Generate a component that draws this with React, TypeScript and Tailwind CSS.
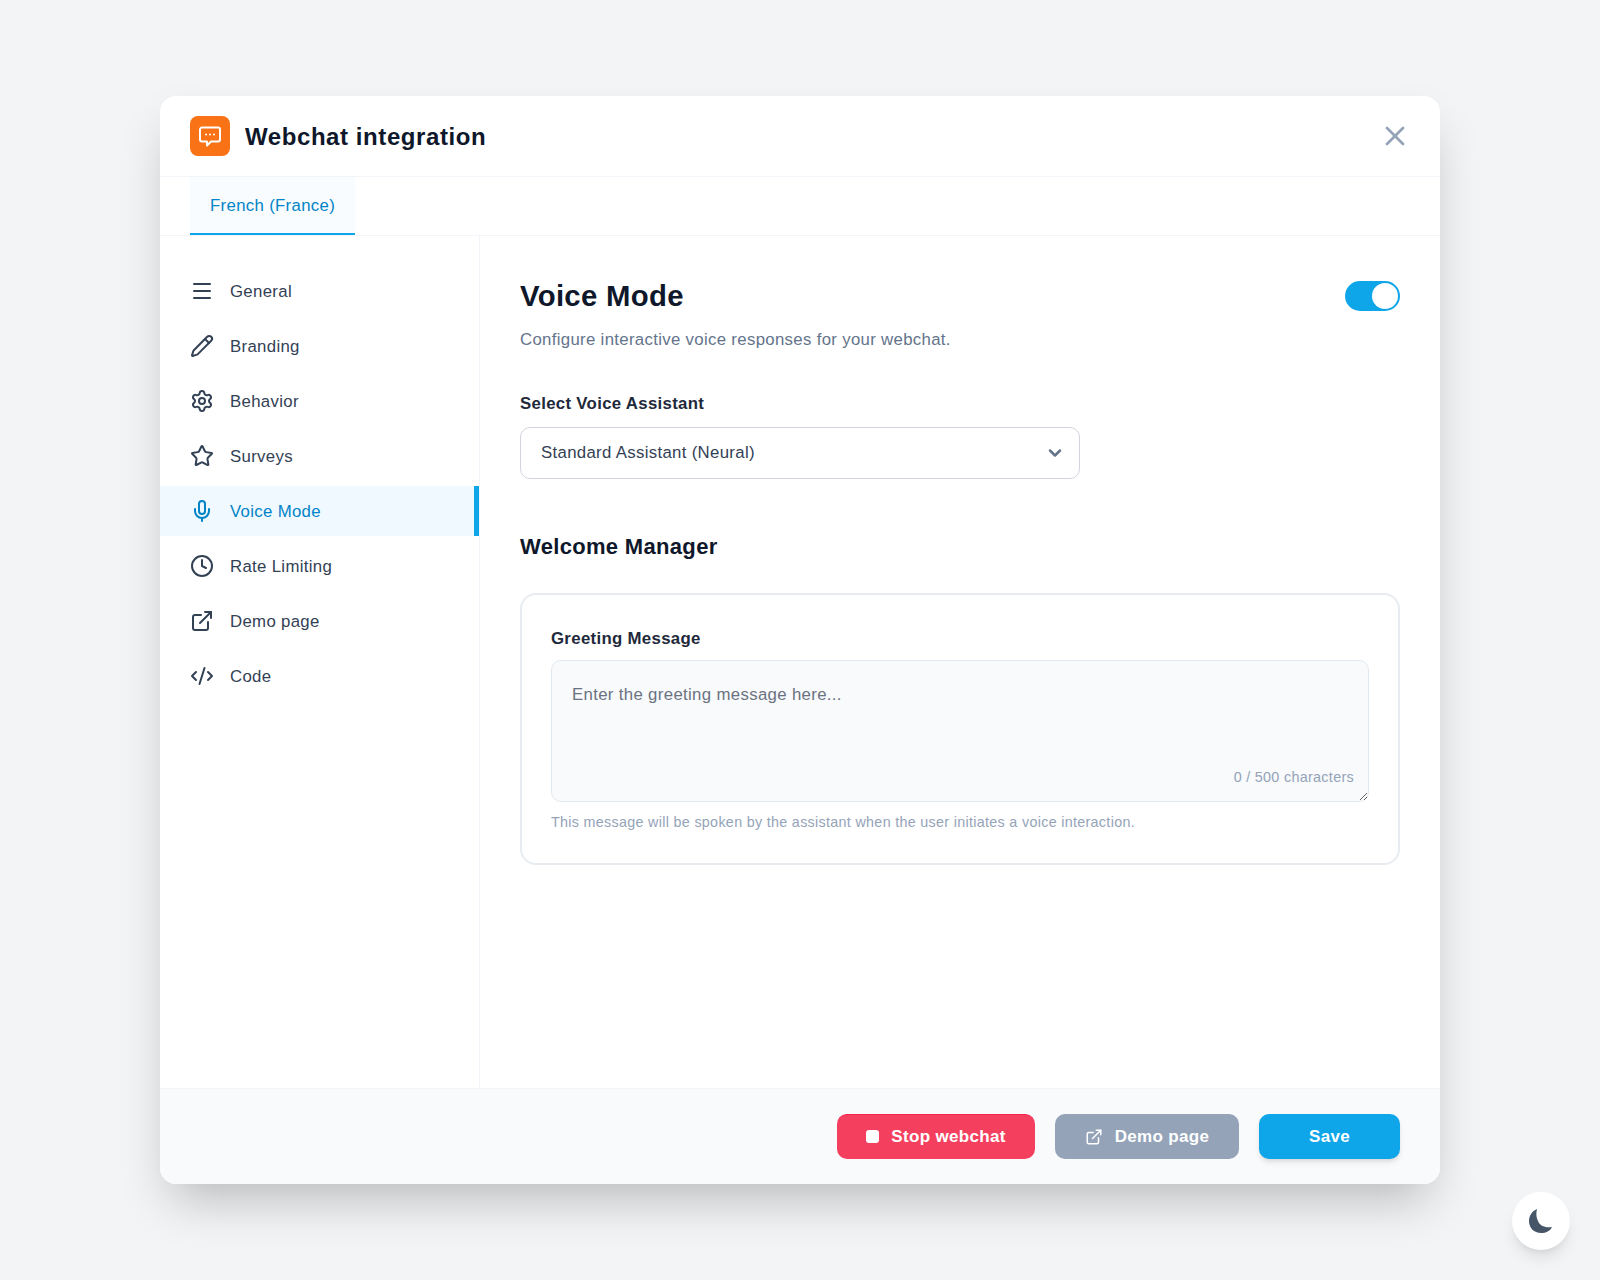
import React from 'react';
import { Menu, Pencil, Settings, Star, Mic, Clock, ExternalLink, CodeXml, X, ChevronDown } from 'lucide-react';

const navItems = [
  { label: 'General', icon: Menu },
  { label: 'Branding', icon: Pencil },
  { label: 'Behavior', icon: Settings },
  { label: 'Surveys', icon: Star },
  { label: 'Voice Mode', icon: Mic, active: true },
  { label: 'Rate Limiting', icon: Clock },
  { label: 'Demo page', icon: ExternalLink },
  { label: 'Code', icon: CodeXml },
];

const NavItem = ({ label, icon: Icon, active }: { label: string; icon: any; active?: boolean }) => (
  <div
    className={`flex h-[50px] items-center gap-4 border-r-[5px] pl-[30px] text-[16.8px] ${
      active ? 'border-[#0ea5e9] bg-[#f0f9ff] text-[#0284c7]' : 'border-transparent text-[#334155]'
    }`}
  >
    <Icon size={24} strokeWidth={2} />
    <span className="pt-[2px]">{label}</span>
  </div>
);

export default function App() {
  return (
    <div className="relative flex min-h-screen items-center justify-center bg-[#f3f4f6] font-['Liberation_Sans',sans-serif] tracking-[0.02em]">
      <div className="flex h-[1088px] w-[1280px] flex-col overflow-hidden rounded-2xl bg-white shadow-[0_25px_50px_-12px_rgba(0,0,0,0.25)]">
        <header className="flex h-[81px] shrink-0 items-center justify-between border-b border-[#f1f5f9] pr-[29px] pl-[30px]">
          <div className="flex items-center gap-[15px]">
            <div className="flex h-10 w-10 items-center justify-center rounded-lg bg-[#f97316] text-white">
              <svg width="24" height="24" viewBox="0 0 24 24" fill="none" stroke="currentColor" strokeWidth="2" strokeLinejoin="round">
                <path d="M4 3.5h16a2 2 0 0 1 2 2v10a2 2 0 0 1-2 2h-7l-4 4v-4H4a2 2 0 0 1-2-2v-10a2 2 0 0 1 2-2z" />
                <path d="M8 10.5h.01M12 10.5h.01M16 10.5h.01" strokeLinecap="round" />
              </svg>
            </div>
            <h1 className="pt-[2px] text-2xl font-bold tracking-[0.024em] text-[#0f172a]">Webchat integration</h1>
          </div>
          <X size={32} strokeWidth={2} className="text-[#94a3b8]" />
        </header>

        <div className="flex h-[59px] shrink-0 border-b border-[#f1f5f9] pl-[30px]">
          <div className="flex h-[58px] items-center border-b-2 border-[#0ea5e9] bg-[#f8fcff] px-5 pt-[2px] text-[16.8px] text-[#0284c7]">
            French (France)
          </div>
        </div>

        <div className="flex min-h-0 flex-1">
          <nav className="flex w-[320px] shrink-0 flex-col gap-[5px] border-r border-[#f1f5f9] pt-[30px]">
            {navItems.map((item) => (
              <NavItem key={item.label} {...item} />
            ))}
          </nav>

          <main className="flex-1 px-10 pt-[42px]">
            <div className="flex items-center justify-between">
              <h2 className="text-[29.3px] leading-9 font-bold text-[#0f172a]">Voice Mode</h2>
              <div className="flex h-[30px] w-[55px] items-center justify-end rounded-full bg-[#0ea5e9] pr-[2px]">
                <div className="h-[26px] w-[26px] rounded-full bg-white" />
              </div>
            </div>
            <p className="mt-[14px] text-[16.8px] leading-6 text-[#64748b]">Configure interactive voice responses for your webchat.</p>

            <label className="mt-[40px] block text-[16.8px] leading-6 font-bold text-[#1e293b]">Select Voice Assistant</label>
            <div className="mt-[11px] flex h-[52px] w-[560px] items-center justify-between rounded-[10px] border border-[#d1d5db] pr-[14px] pl-5 text-[16.8px] text-[#334155]">
              <span>Standard Assistant (Neural)</span>
              <ChevronDown size={20} strokeWidth={3} className="text-[#64748b]" />
            </div>

            <h3 className="mt-[52px] text-[22px] leading-8 font-bold text-[#0f172a]">Welcome Manager</h3>

            <section className="mt-[30px] rounded-2xl border-2 border-[#e8ecf1] px-[29px] pt-[32px] pb-[31px]">
              <label className="block text-[16.8px] leading-6 font-bold text-[#1e293b]">Greeting Message</label>
              <div className="relative mt-[9px]">
                <textarea
                  readOnly
                  placeholder="Enter the greeting message here..."
                  className="block h-[142px] w-full rounded-[10px] border border-[#e2e8f0] bg-[#f8fafc] px-5 pt-[21px] pb-5 text-[16.8px] tracking-[0.02em] outline-none placeholder:text-[#6b7280]"
                />
                <span className="absolute right-[15px] bottom-[13px] text-[14.4px] tracking-[0.02em] text-[#94a3b8]">0 / 500 characters</span>
              </div>
              <p className="mt-[10px] text-[14.3px] leading-5 text-[#94a3b8]">
                This message will be spoken by the assistant when the user initiates a voice interaction.
              </p>
            </section>
          </main>
        </div>

        <footer className="flex h-[96px] shrink-0 items-center justify-end gap-5 border-t border-[#f1f5f9] bg-[#f8fafc] pr-10">
          <button className="flex h-[45px] w-[198px] items-center justify-center gap-3 rounded-[10px] border-t border-t-[#fb1f50] bg-[#f43f5e] pb-[1px] text-[17px] font-bold text-white">
            <span className="h-[13px] w-[13px] rounded-[3px] bg-white" />
            Stop webchat
          </button>
          <button className="flex h-[45px] w-[184px] items-center justify-center gap-3 rounded-[10px] bg-[#94a3b8] text-[17px] font-bold text-white">
            <ExternalLink size={18} strokeWidth={2} />
            Demo page
          </button>
          <button className="flex h-[45px] w-[141px] items-center justify-center rounded-[10px] bg-[#0ea5e9] text-[17px] font-bold text-white shadow-md">
            Save
          </button>
        </footer>
      </div>

      <button className="absolute right-[30px] bottom-[30px] flex h-[58px] w-[58px] items-center justify-center rounded-full bg-white text-[#475569] shadow-lg">
        <svg width="24" height="24" viewBox="0 0 24 24" fill="currentColor">
          <path d="M8 0C3 2 0 7 0 12c0 7 5 12 12 12 5 0 9-2 11-6-7 1-12-1-14-6C7 8 7 4 8 0z" />
        </svg>
      </button>
    </div>
  );
}
